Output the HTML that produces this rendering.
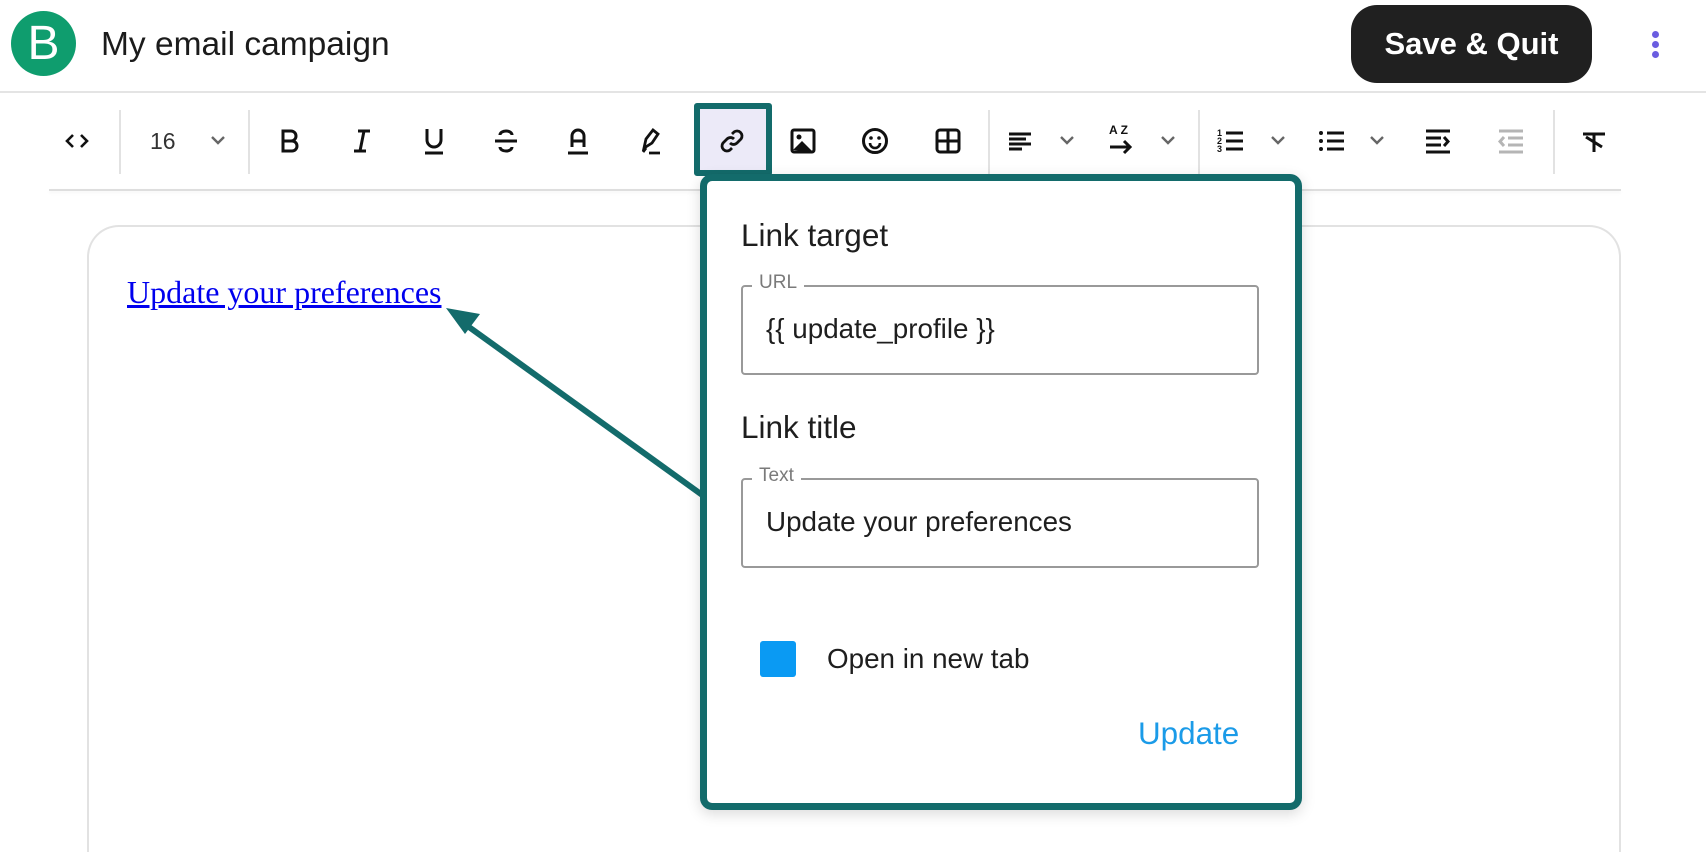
<!DOCTYPE html>
<html style="overflow:hidden"><head><meta charset="utf-8">
<style>
*{margin:0;padding:0;box-sizing:border-box}
html,body{width:1706px;height:852px;overflow:hidden}
body{background:#fff;font-family:"Liberation Sans",sans-serif;position:relative}
#w{position:relative;width:1706px;height:852px;overflow:hidden}
.a{position:absolute}
.ic{position:absolute;top:126px;width:30px;height:30px}
.sep{position:absolute;top:110px;width:2px;height:64px;background:#e2e2e2}
.chev{position:absolute;top:133px;width:18px;height:14px}
</style></head><body><div id="w">
<div class="a" style="left:11px;top:11px;width:65px;height:65px;border-radius:50%;background:#0f9d6e"></div>
<div class="a" style="left:11px;top:11px;width:65px;height:65px;color:#fff;font-size:48px;line-height:65px;text-align:center;font-weight:400">B</div>
<div class="a" style="left:101px;top:26px;font-size:33.5px;color:#1b1b1b">My email campaign</div>
<div class="a" style="left:1351px;top:5px;width:241px;height:78px;border-radius:26px;background:#202020;color:#fff;font-weight:700;font-size:31px;line-height:78px;text-align:center">Save &amp; Quit</div>
<div class="a" style="left:1652px;top:31px;width:7px;height:7px;border-radius:50%;background:#6b5de0"></div>
<div class="a" style="left:1652px;top:41px;width:7px;height:7px;border-radius:50%;background:#6b5de0"></div>
<div class="a" style="left:1652px;top:51px;width:7px;height:7px;border-radius:50%;background:#6b5de0"></div>
<div class="a" style="left:0;top:91px;width:1706px;height:2px;background:#e4e4e4"></div>
<div class="a" style="left:49px;top:189px;width:1572px;height:2px;background:#dedede;box-shadow:0 2px 3px rgba(0,0,0,.05)"></div>
<div class="sep" style="left:119px"></div><div class="sep" style="left:248px"></div><div class="sep" style="left:988px"></div><div class="sep" style="left:1198px"></div><div class="sep" style="left:1553px"></div>
<svg class="ic" style="left:62px" viewBox="0 0 30 30"><path d="M11 9l-6 6 6 6M19 9l6 6-6 6" fill="none" stroke="#111" stroke-width="2.6"/></svg>
<div class="a" style="left:150px;top:128px;font-size:23px;color:#333">16</div>
<svg class="chev" style="left:209px" viewBox="0 0 18 14"><path d="M3 4l6 6 6-6" fill="none" stroke="#666" stroke-width="2.4"/></svg>
<svg class="ic" style="left:274px" viewBox="0 0 30 30"><path d="M9 5h8a5 5 0 010 10H9zM9 15h9a5 5 0 010 10H9z" fill="none" stroke="#111" stroke-width="3"/></svg>
<svg class="ic" style="left:347px" viewBox="0 0 30 30"><path d="M11 5h12M7 25h12M17 5l-4 20" fill="none" stroke="#111" stroke-width="3"/></svg>
<svg class="ic" style="left:419px" viewBox="0 0 30 30"><path d="M8 3v11a7 7 0 0014 0V3M6 27h18" fill="none" stroke="#111" stroke-width="3"/></svg>
<svg class="ic" style="left:491px" viewBox="0 0 30 30"><path d="M21 9a6 4 0 00-12 0M9 21a6 4 0 0012 0M4 15h22" fill="none" stroke="#111" stroke-width="3"/></svg>
<svg class="ic" style="left:563px" viewBox="0 0 30 30"><path d="M9 21V10a6 6 0 0112 0v11M9 15h12M5 27h20" fill="none" stroke="#111" stroke-width="3"/></svg>
<svg class="ic" style="left:635px" viewBox="0 0 30 30"><path d="M9 22l2-9 7-9 5 4-6 9zM8 26l3-4M14 27h11" fill="none" stroke="#111" stroke-width="2.8"/></svg>
<div class="a" style="left:694px;top:103px;width:78px;height:73px;border:6px solid #136b6b;border-radius:3px;background:#eceaf8"></div>
<svg class="ic" style="left:717px" viewBox="0 0 30 30"><path d="M13 17a5 5 0 007 0l4-4a5 5 0 00-7-7l-2 2M17 13a5 5 0 00-7 0l-4 4a5 5 0 007 7l2-2" fill="none" stroke="#111" stroke-width="2.8"/></svg>
<svg class="ic" style="left:788px" viewBox="0 0 30 30"><rect x="4" y="4" width="22" height="22" rx="2" fill="none" stroke="#111" stroke-width="3"/><circle cx="11" cy="11" r="2.5" fill="#111"/><path d="M5 24l9-9 11 11" fill="#111"/></svg>
<svg class="ic" style="left:860px" viewBox="0 0 30 30"><circle cx="15" cy="15" r="11.5" fill="none" stroke="#111" stroke-width="3"/><circle cx="11" cy="12" r="1.8" fill="#111"/><circle cx="19" cy="12" r="1.8" fill="#111"/><path d="M10 17a5 5 0 0010 0" fill="none" stroke="#111" stroke-width="2.6"/></svg>
<svg class="ic" style="left:933px" viewBox="0 0 30 30"><rect x="4" y="4" width="22" height="22" rx="3" fill="none" stroke="#111" stroke-width="3"/><path d="M15 4v22M4 15h22" stroke="#111" stroke-width="3"/></svg>
<svg class="ic" style="left:1006px" viewBox="0 0 30 30"><path d="M3 8h22M3 13h17M3 18h22M3 23h13" stroke="#111" stroke-width="3"/></svg>
<svg class="chev" style="left:1058px" viewBox="0 0 18 14"><path d="M3 4l6 6 6-6" fill="none" stroke="#666" stroke-width="2.4"/></svg>
<div class="a" style="left:1109px;top:123px;font-size:12px;font-weight:700;color:#111;letter-spacing:3px">AZ</div>
<svg class="a" style="left:1107px;top:138px;width:30px;height:18px" viewBox="0 0 30 18"><path d="M3 9h20M17 3l6 6-6 6" fill="none" stroke="#111" stroke-width="3"/></svg>
<svg class="chev" style="left:1159px" viewBox="0 0 18 14"><path d="M3 4l6 6 6-6" fill="none" stroke="#666" stroke-width="2.4"/></svg>
<svg class="ic" style="left:1216px" viewBox="0 0 30 30"><path d="M10 7h17M10 15h17M10 23h17" stroke="#111" stroke-width="3"/><text x="1" y="10" font-size="9" font-weight="700" fill="#111">1</text><text x="1" y="18" font-size="9" font-weight="700" fill="#111">2</text><text x="1" y="26" font-size="9" font-weight="700" fill="#111">3</text></svg>
<svg class="chev" style="left:1269px" viewBox="0 0 18 14"><path d="M3 4l6 6 6-6" fill="none" stroke="#666" stroke-width="2.4"/></svg>
<svg class="ic" style="left:1317px" viewBox="0 0 30 30"><path d="M10 7h17M10 15h17M10 23h17" stroke="#111" stroke-width="3"/><circle cx="4" cy="7" r="2" fill="#111"/><circle cx="4" cy="15" r="2" fill="#111"/><circle cx="4" cy="23" r="2" fill="#111"/></svg>
<svg class="chev" style="left:1368px" viewBox="0 0 18 14"><path d="M3 4l6 6 6-6" fill="none" stroke="#666" stroke-width="2.4"/></svg>
<svg class="ic" style="left:1423px" viewBox="0 0 30 30"><path d="M3 5h24M3 12h15M3 19h15M3 26h24M21 11l4 4.5-4 4.5" fill="none" stroke="#111" stroke-width="3"/></svg>
<svg class="ic" style="left:1496px" viewBox="0 0 30 30"><path d="M3 5h24M12 12h15M12 19h15M3 26h24M8 11l-4 4.5 4 4.5" fill="none" stroke="#b5b5b5" stroke-width="3"/></svg>
<svg class="ic" style="left:1579px" viewBox="0 0 30 30"><path d="M4 8h22M15 8v18M7 11l16 10" fill="none" stroke="#111" stroke-width="3"/></svg>
<div class="a" style="left:87px;top:225px;width:1534px;height:627px;border:2px solid #e2e2e2;border-bottom:none;border-radius:32px 32px 0 0"></div>
<div class="a" style="left:127px;top:274px;font-family:'Liberation Serif',serif;font-size:32px;color:#0000ee;text-decoration:underline">Update your preferences</div>
<svg class="a" style="left:0;top:0;width:1706px;height:852px" viewBox="0 0 1706 852"><path d="M705 497L462 322" stroke="#136b6b" stroke-width="6"/><path d="M446 308l34 6-15 20z" fill="#136b6b"/></svg>
<div class="a" style="left:700px;top:174px;width:602px;height:636px;border:7px solid #136b6b;border-radius:12px;background:#fff;box-shadow:0 4px 14px rgba(0,0,0,.15)"></div>
<div class="a" style="left:741px;top:217px;font-size:31.5px;color:#1e1e1e">Link target</div>
<div class="a" style="left:741px;top:285px;width:518px;height:90px;border:2px solid #999;border-radius:4px"></div>
<div class="a" style="left:752px;top:272px;padding:0 7px;background:#fff;font-size:19px;color:#7a7a7a">URL</div>
<div class="a" style="left:766px;top:313px;font-size:27.8px;color:#1e1e1e">{{ update_profile }}</div>
<div class="a" style="left:741px;top:409px;font-size:31.5px;color:#1e1e1e">Link title</div>
<div class="a" style="left:741px;top:478px;width:518px;height:90px;border:2px solid #999;border-radius:4px"></div>
<div class="a" style="left:752px;top:465px;padding:0 7px;background:#fff;font-size:19px;color:#7a7a7a">Text</div>
<div class="a" style="left:766px;top:506px;font-size:27.8px;color:#1e1e1e">Update your preferences</div>
<div class="a" style="left:760px;top:641px;width:36px;height:36px;border-radius:3px;background:#0a9af3"></div>
<div class="a" style="left:827px;top:643px;font-size:27.8px;color:#1e1e1e">Open in new tab</div>
<div class="a" style="left:1138px;top:716px;font-size:31.4px;color:#1b9be8">Update</div>
</div></body></html>
